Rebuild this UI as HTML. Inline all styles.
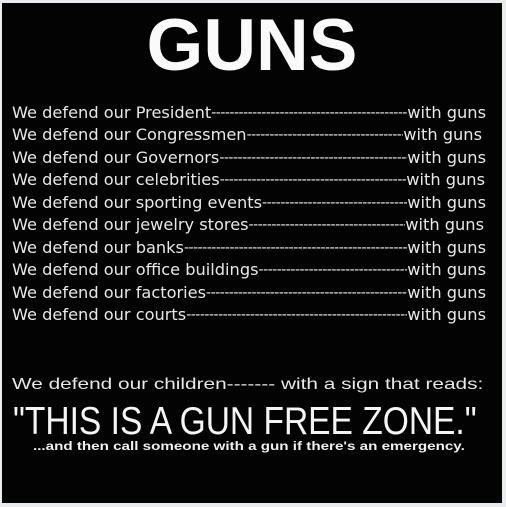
<!DOCTYPE html>
<html><head><style>
html,body{margin:0;padding:0;}
body{width:506px;height:507px;background:#e9ebee;position:relative;overflow:hidden;font-family:"Liberation Sans",sans-serif;}
#img{position:absolute;left:2px;top:3px;width:500px;height:500px;background:#030303;overflow:hidden;}
.t{position:absolute;color:#f2f2f2;white-space:nowrap;transform-origin:0 0;}
#guns{left:0;width:500px;text-align:center;top:1px;font-size:73px;font-weight:bold;color:#fafafa;}
.row{position:absolute;left:10px;width:474px;display:flex;font-family:"DejaVu Sans",sans-serif;font-size:16.2px;color:#e8e8e8;height:20px;line-height:20px;}
.row .d{flex:1;min-width:0;overflow:hidden;white-space:nowrap;letter-spacing:-0.5px;font-size:14px;}
</style></head><body>
<div id="img">
<div class="t" id="guns">GUNS</div>
<div class="row" style="top:100px"><span>We defend our President</span><span class="d">----------------------------------------------------------------------------------------------------</span><span>with guns</span></div>
<div class="row" style="top:122px;width:470px"><span>We defend our Congressmen</span><span class="d">----------------------------------------------------------------------------------------------------</span><span>with guns</span></div>
<div class="row" style="top:145px"><span>We defend our Governors</span><span class="d">----------------------------------------------------------------------------------------------------</span><span>with guns</span></div>
<div class="row" style="top:167px;width:473px"><span>We defend our celebrities</span><span class="d">----------------------------------------------------------------------------------------------------</span><span>with guns</span></div>
<div class="row" style="top:190px"><span>We defend our sporting events</span><span class="d">----------------------------------------------------------------------------------------------------</span><span>with guns</span></div>
<div class="row" style="top:212px;width:472px"><span>We defend our jewelry stores</span><span class="d">----------------------------------------------------------------------------------------------------</span><span>with guns</span></div>
<div class="row" style="top:235px"><span>We defend our banks</span><span class="d">----------------------------------------------------------------------------------------------------</span><span>with guns</span></div>
<div class="row" style="top:257px"><span>We defend our office buildings</span><span class="d">----------------------------------------------------------------------------------------------------</span><span>with guns</span></div>
<div class="row" style="top:280px"><span>We defend our factories</span><span class="d">----------------------------------------------------------------------------------------------------</span><span>with guns</span></div>
<div class="row" style="top:302px"><span>We defend our courts</span><span class="d">----------------------------------------------------------------------------------------------------</span><span>with guns</span></div>
<div class="t" style="left:10px;top:373px;font-size:16px;color:#e8e8e8;transform:scaleX(1.3);">We defend our children------- with a sign that reads:</div>
<div class="t" style="left:11px;top:397px;font-size:39px;color:#f5f5f5;transform:scaleX(0.86);">"THIS IS A GUN FREE ZONE."</div>
<div class="t" style="left:31px;top:438px;font-size:11.5px;font-weight:bold;color:#f0f0f0;transform:scaleX(1.32);">...and then call someone with a gun if there's an emergency.</div>
</div>
</body></html>
